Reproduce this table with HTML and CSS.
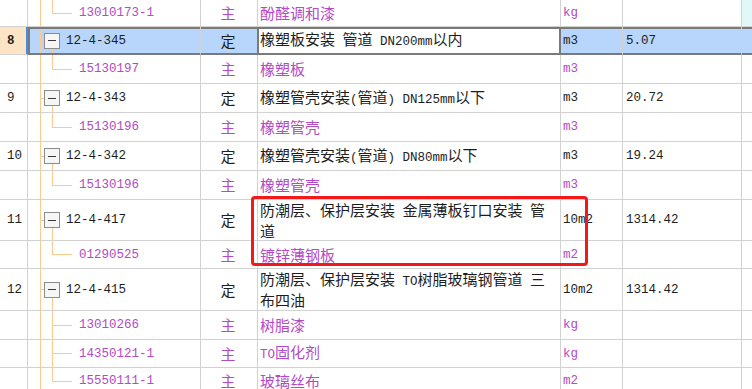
FILE: index.html
```html
<!DOCTYPE html>
<html lang="zh-CN">
<head>
<meta charset="utf-8">
<title>定额表</title>
<link rel="stylesheet" href="styles.css">
</head>
<body>
<div class="sheet">
  <div class="row child h27 hover">
    <div class="c seq"></div>
    <div class="c code tree-last"><span class="en">13010173-1</span></div>
    <div class="c type">主</div>
    <div class="c name"><span class="txt">酚醛调和漆</span></div>
    <div class="c unit en">kg</div>
    <div class="c amt en"></div>
    <div class="c extra"></div>
  </div>
  <div class="row parent h28 sel">
    <div class="c seq en">8</div>
    <div class="c code tree-parent"><span class="tog"></span><span class="en">12-4-345</span></div>
    <div class="c type">定</div>
    <div class="c name"><span class="txt">橡塑板安装<span class="en"> </span>管道<span class="en"> DN200mm</span>以内</span></div>
    <div class="c unit en">m3</div>
    <div class="c amt en">5.07</div>
    <div class="c extra"></div>
  </div>
  <div class="row child">
    <div class="c seq"></div>
    <div class="c code tree-last"><span class="en">15130197</span></div>
    <div class="c type">主</div>
    <div class="c name"><span class="txt">橡塑板</span></div>
    <div class="c unit en">m3</div>
    <div class="c amt en"></div>
    <div class="c extra"></div>
  </div>
  <div class="row parent">
    <div class="c seq en">9</div>
    <div class="c code tree-parent"><span class="tog"></span><span class="en">12-4-343</span></div>
    <div class="c type">定</div>
    <div class="c name"><span class="txt">橡塑管壳安装<span class="en">(</span>管道<span class="en">) DN125mm</span>以下</span></div>
    <div class="c unit en">m3</div>
    <div class="c amt en">20.72</div>
    <div class="c extra"></div>
  </div>
  <div class="row child">
    <div class="c seq"></div>
    <div class="c code tree-last"><span class="en">15130196</span></div>
    <div class="c type">主</div>
    <div class="c name"><span class="txt">橡塑管壳</span></div>
    <div class="c unit en">m3</div>
    <div class="c amt en"></div>
    <div class="c extra"></div>
  </div>
  <div class="row parent">
    <div class="c seq en">10</div>
    <div class="c code tree-parent"><span class="tog"></span><span class="en">12-4-342</span></div>
    <div class="c type">定</div>
    <div class="c name"><span class="txt">橡塑管壳安装<span class="en">(</span>管道<span class="en">) DN80mm</span>以下</span></div>
    <div class="c unit en">m3</div>
    <div class="c amt en">19.24</div>
    <div class="c extra"></div>
  </div>
  <div class="row child">
    <div class="c seq"></div>
    <div class="c code tree-last"><span class="en">15130196</span></div>
    <div class="c type">主</div>
    <div class="c name"><span class="txt">橡塑管壳</span></div>
    <div class="c unit en">m3</div>
    <div class="c amt en"></div>
    <div class="c extra"></div>
  </div>
  <div class="row parent h41">
    <div class="c seq en">11</div>
    <div class="c code tree-parent"><span class="tog"></span><span class="en">12-4-417</span></div>
    <div class="c type">定</div>
    <div class="c name"><span class="txt">防潮层、保护层安装<span class="en"> </span>金属薄板钉口安装<span class="en"> </span>管<br>道</span></div>
    <div class="c unit en">10m2</div>
    <div class="c amt en">1314.42</div>
    <div class="c extra"></div>
  </div>
  <div class="row child h28">
    <div class="c seq"></div>
    <div class="c code tree-last"><span class="en">01290525</span></div>
    <div class="c type">主</div>
    <div class="c name"><span class="txt">镀锌薄钢板</span></div>
    <div class="c unit en">m2</div>
    <div class="c amt en"></div>
    <div class="c extra"></div>
  </div>
  <div class="row parent h42">
    <div class="c seq en">12</div>
    <div class="c code tree-parent"><span class="tog"></span><span class="en">12-4-415</span></div>
    <div class="c type">定</div>
    <div class="c name"><span class="txt">防潮层、保护层安装<span class="en"> TO</span>树脂玻璃钢管道<span class="en"> </span>三<br>布四油</span></div>
    <div class="c unit en">10m2</div>
    <div class="c amt en">1314.42</div>
    <div class="c extra"></div>
  </div>
  <div class="row child">
    <div class="c seq"></div>
    <div class="c code tree-mid"><span class="en">13010266</span></div>
    <div class="c type">主</div>
    <div class="c name"><span class="txt">树脂漆</span></div>
    <div class="c unit en">kg</div>
    <div class="c amt en"></div>
    <div class="c extra"></div>
  </div>
  <div class="row child h28">
    <div class="c seq"></div>
    <div class="c code tree-mid"><span class="en">14350121-1</span></div>
    <div class="c type">主</div>
    <div class="c name"><span class="txt"><span class="en">TO</span>固化剂</span></div>
    <div class="c unit en">kg</div>
    <div class="c amt en"></div>
    <div class="c extra"></div>
  </div>
  <div class="row child h21">
    <div class="c seq"></div>
    <div class="c code tree-last"><span class="en">15550111-1</span></div>
    <div class="c type">主</div>
    <div class="c name"><span class="txt">玻璃丝布</span></div>
    <div class="c unit en">m2</div>
    <div class="c amt en"></div>
    <div class="c extra"></div>
  </div>
  <div class="annot"></div>
</div>
</body>
</html>
```

FILE: styles.css
```css
html, body {
  margin: 0;
  padding: 0;
  background: #ffffff;
}
body {
  width: 752px;
  height: 389px;
  overflow: hidden;
  font-family: "Noto Sans CJK SC", "Noto Sans", sans-serif;
  font-size: 15px;
  line-height: 18px;
  color: #1e1e1e;
}
.sheet {
  position: relative;
}
.row {
  display: grid;
  grid-template-columns: 28px 173px 57px 303px 62px 119px 1fr;
  height: 29px;
}
.row.h21 { height: 21px; }
.row.h27 { height: 27px; }
.row.h28 { height: 28px; }
.row.h41 { height: 41px; }
.row.h42 { height: 42px; }

.row.h21 .c { border-bottom: none; align-items: flex-start; padding-top: 4px; }

.c {
  box-sizing: border-box;
  display: flex;
  align-items: center;
  border-right: 1px solid #d2d2d2;
  border-bottom: 1px solid #d2d2d2;
  white-space: nowrap;
  overflow: hidden;
}
.extra { border-right: none; }
.txt { display: block; }

.en {
  font-family: "Liberation Mono", "DejaVu Sans Mono", monospace;
  font-size: 12.5px;
}
.seq { padding-left: 7px; }
.type { justify-content: center; padding-right: 2px; }
.name { padding-left: 2px; }
.unit { padding-left: 2px; }
.amt { padding-left: 3px; }

.child .code,
.child .type,
.child .name,
.child .unit { color: #b34ac6; }

/* tree lines */
.code {
  --tl: #fdc98f;
  background-repeat: no-repeat;
  background-image: linear-gradient(var(--tl), var(--tl));
  background-position: 12px 0;
  background-size: 1px 100%;
}
.child .code { padding-left: 51px; }
.tree-mid {
  background-image:
    linear-gradient(var(--tl), var(--tl)),
    linear-gradient(var(--tl), var(--tl)),
    linear-gradient(var(--tl), var(--tl));
  background-position: 12px 0, 24px 0, 24px 50%;
  background-size: 1px 100%, 1px 100%, 20px 1px;
}
.tree-last {
  background-image:
    linear-gradient(var(--tl), var(--tl)),
    linear-gradient(var(--tl), var(--tl)),
    linear-gradient(var(--tl), var(--tl));
  background-position: 12px 0, 24px 0, 24px 50%;
  background-size: 1px 100%, 1px 50%, 20px 1px;
}
.row.h21 .tree-last {
  background-position: 12px 0, 24px 0, 24px 13px;
  background-size: 1px 100%, 1px 13px, 20px 1px;
}
.tree-parent {
  background-image:
    linear-gradient(var(--tl), var(--tl)),
    linear-gradient(var(--tl), var(--tl)),
    linear-gradient(var(--tl), var(--tl));
  background-position: 12px 0, 12px 50%, 24px 100%;
  background-size: 1px 100%, 4px 1px, 1px 50%;
}
.tog {
  display: inline-block;
  box-sizing: border-box;
  width: 16px;
  height: 16px;
  margin-left: 16px;
  margin-right: 6px;
  border: 1px solid #8c8c8c;
  background: linear-gradient(#3a3a3a, #3a3a3a) 50% 50% / 8px 1px no-repeat, #f6f6f6;
}

/* hovered top row */
.hover .extra { background-color: #e0f8f8; }

/* selected row */
.sel .seq {
  background-color: #fde4c5;
  font-weight: bold;
  border-right-color: #3f8ee6;
  box-shadow: inset -1px 0 #3f8ee6;
}
.sel .code,
.sel .type,
.sel .name,
.sel .unit,
.sel .amt,
.sel .extra {
  background-color: #b8d6fb;
  border-bottom-color: #7a7a7a;
  box-shadow: inset 0 2px #7a7a7a, inset 0 -1px #7a7a7a;
}
.sel .code {
  box-shadow: inset 2px 0 #7a7a7a, inset 0 2px #7a7a7a, inset 0 -1px #7a7a7a;
}
.sel .type { border-right-color: #7a7a7a; }
.sel .name {
  background-color: #ffffff;
  border-right-color: #7a7a7a;
  box-shadow: inset 1px 0 #7a7a7a, inset -1px 0 #7a7a7a, inset 0 2px #7a7a7a, inset 0 -1px #7a7a7a;
}

/* red annotation frame */
.annot {
  position: absolute;
  left: 251px;
  top: 196px;
  width: 337px;
  height: 70px;
  box-sizing: border-box;
  border: 3px solid #f2191b;
  border-radius: 4px;
}
```
